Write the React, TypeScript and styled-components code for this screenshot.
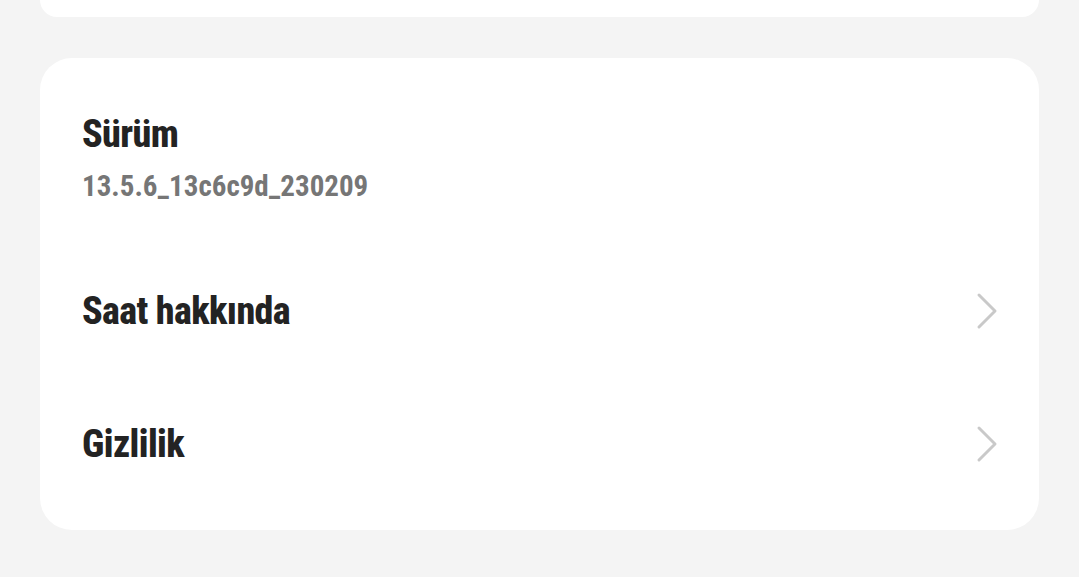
import React from 'react';
import styled, { createGlobalStyle } from 'styled-components';

const GlobalStyle = createGlobalStyle`
  html, body {
    margin: 0;
    padding: 0;
    background: #f4f4f4;
    font-family: Roboto, "Liberation Sans", sans-serif;
  }
`;

const Page = styled.div`
  width: 1079px;
  height: 577px;
  overflow: hidden;
  display: flex;
  flex-direction: column;
  gap: 41px;
  padding: 0 40px;
  box-sizing: border-box;
`;

const Card = styled.section<{ $cut?: boolean }>`
  background: #fff;
  border-radius: 32px;
  ${p => p.$cut && 'height: 17px; border-top-left-radius: 0; border-top-right-radius: 0;'}
  padding: ${p => (p.$cut ? '0' : '0 41px 20px 42px')};
`;

const Info = styled.div`
  display: flex;
  flex-direction: column;
  padding-top: 53px;
  height: 186px;
  box-sizing: border-box;
`;

const Title = styled.div`
  font-size: 38px;
  font-weight: 800;
  font-stretch: condensed;
  color: #232323;
  line-height: 46px;
  letter-spacing: -0.6px;
`;

const Version = styled.div`
  margin-top: 12px;
  font-size: 29px;
  font-weight: 700;
  font-stretch: condensed;
  color: #767676;
  line-height: 34px;
`;

const Row = styled.div`
  height: 133px;
  display: flex;
  align-items: center;
  justify-content: space-between;
`;

const Chevron = () => (
  <svg width="22" height="38" viewBox="0 0 22 38">
    <path d="M3 3 L19 19 L3 35" fill="none" stroke="#c9c9c9" strokeWidth="3" strokeLinecap="round" strokeLinejoin="round" />
  </svg>
);

export default function App() {
  return (
    <>
      <GlobalStyle />
      <Page>
        <Card $cut />
        <Card>
          <Info>
            <Title>Sürüm</Title>
            <Version>13.5.6_13c6c9d_230209</Version>
          </Info>
          <Row>
            <Title>Saat hakkında</Title>
            <Chevron />
          </Row>
          <Row>
            <Title>Gizlilik</Title>
            <Chevron />
          </Row>
        </Card>
      </Page>
    </>
  );
}
